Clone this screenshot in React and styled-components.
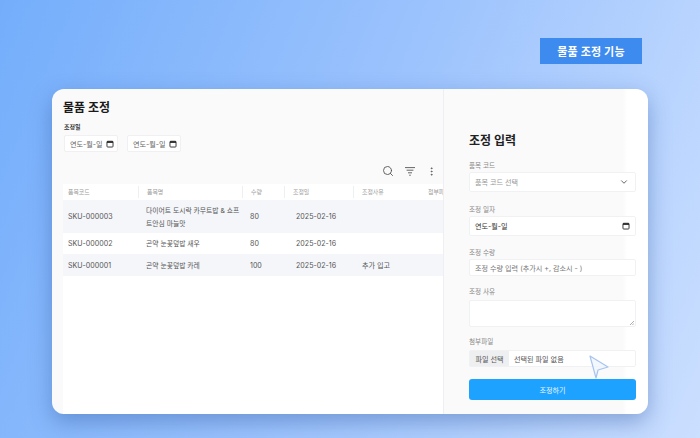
import React from "react";
import styled, { createGlobalStyle } from "styled-components";
import { Search, ChevronDown, EllipsisVertical } from "lucide-react";

const Global = createGlobalStyle`
  html, body { margin: 0; padding: 0; }
  body { font-family: "Inter", "Noto Sans CJK KR", sans-serif; }
  * { box-sizing: border-box; }
`;
const Page = styled.div`
  width: 700px; height: 438px; overflow: hidden;
  display: flex; flex-direction: column; align-items: flex-start;
  padding: 38px 58px 0 52px;
  background: linear-gradient(112deg, #74aefb 0%, #9cc3fd 50%, #cbdfff 100%);
`;
const Badge = styled.div`
  align-self: flex-end; width: 102px; height: 26px;
  display: flex; align-items: center; justify-content: center;
  background: #3d8bef; color: #fff; font-size: 11px; font-weight: 700; letter-spacing: .2px;
`;
const Card = styled.div`
  margin-top: 25px; width: 596px; height: 325px; flex: none;
  display: flex; overflow: hidden; position: relative;
  background: linear-gradient(90deg, #fafafb 0, #fafafb 571px, #fff 575px);
  border-radius: 12px;
  box-shadow: 0 8px 22px rgba(45, 85, 160, .42);
`;
const Left = styled.section`
  width: 392px; flex: none; padding: 10px 0 0 11px;
  display: flex; flex-direction: column; border-right: 1px solid #eeeff1;
`;
const Title = styled.h1`
  margin: 0; font-size: 12px; line-height: 18px; font-weight: 700; color: #1a1a1a;
`;
const FilterLabel = styled.div`
  margin: 5px 0 0 1px; font-size: 6px; line-height: 9px; font-weight: 700; color: #333;
`;
const Dates = styled.div`
  display: flex; gap: 9px; margin: 4px 0 0 1px;
`;
const DateBox = styled.div`
  width: 54px; height: 17px; background: #fff; border: 1px solid #f0f0f2; border-radius: 2px;
  display: flex; align-items: center; gap: 3px; padding-left: 5px;
  font-size: 7.1px; color: #666;
`;
const Tools = styled.div`
  height: 32px; display: flex; align-items: center; justify-content: flex-end; gap: 10px;
  padding: 6px 6px 0 0; color: #555;
`;
const Table = styled.div`
  flex: 1; background: #fff; overflow: hidden;
`;
const Row = styled.div`
  display: grid; grid-template-columns: 75px 104px 42px 69px 67px 60px; align-items: center;
  width: 417px; height: ${p => p.$h}px;
  background: ${p => (p.$shade ? "#f4f6fa" : "#fff")};
  font-size: 7.1px; line-height: 13px; color: #555;
`;
const Head = styled.div`
  padding-left: ${p => p.$pad ?? 8}px; font-size: 5.9px; color: #9a9a9a; white-space: nowrap;
  height: 12px; line-height: 12px;
  border-left: ${p => (p.$first ? "none" : "1px solid #eeeff1")};
`;
const Cell = styled.div`
  padding-left: ${p => p.$pad ?? 8}px;
`;
const NameCell = styled.div`
  padding-left: 8px; font-size: 6.8px; word-break: break-all;
`;
const Right = styled.section`
  flex: 1; padding: 42px 12px 0 25px; display: flex; flex-direction: column;
`;
const FormTitle = styled.h2`
  margin: 0; font-size: 12px; line-height: 20px; font-weight: 700; color: #222;
`;
const Field = styled.div`
  margin-top: ${p => p.$top}px;
`;
const Label = styled.div`
  font-size: 6.6px; line-height: 10px; color: #888; margin-bottom: ${p => p.$gap ?? 1}px;
`;
const Control = styled.div`
  height: ${p => p.$h}px; background: #fff; border: 1px solid #f0f1f3; border-radius: 2px;
  display: flex; align-items: center; justify-content: space-between; padding: 0 ${p => p.$pr ?? 5}px 0 5px;
  font-size: 7.1px; color: ${p => p.$color ?? "#555"}; position: relative; overflow: hidden;
`;
const FileRow = styled.div`
  height: 17px; background: #fff; border: 1px solid #f0f1f3; border-radius: 2px;
  display: flex; align-items: center; font-size: 7.1px; color: #555;
`;
const FileBtn = styled.div`
  width: 39px; height: 100%; background: #eeeff1; display: flex; align-items: center; justify-content: center;
  margin-right: 5px; color: #555;
`;
const Submit = styled.button`
  margin-top: 12px; width: 167px; height: 21px; border: 0; border-radius: 3px;
  background: #1ea2ff; color: #eaf6ff; font: 400 7.1px "Inter", "Noto Sans CJK KR", sans-serif; padding: 0;
`;
const Pointer = styled.svg`
  position: absolute; left: 537px; top: 266px; width: 22px; height: 25px;
`;
const Grip = styled.svg`
  position: absolute; right: 1px; bottom: 1px; width: 5px; height: 5px;
`;

const Cal = ({ s = 8 }) => (
  <svg width={s} height={s} viewBox="0 0 10 10" fill="none">
    <rect x="1.2" y="1.6" width="7.6" height="7.2" rx="1" stroke="#222" strokeWidth="1.1" />
    <rect x="1.2" y="1.6" width="7.6" height="2" fill="#222" />
  </svg>
);
const FilterIcon = () => (
  <svg width="12" height="12" viewBox="0 0 12 12" stroke="#666" strokeWidth="1">
    <path d="M1 2.6h10M2.6 5.2h6.8M4 7.8h4M5.2 10.2h1.6" />
  </svg>
);
const rows = [
  { h: 33, shade: true, sku: "SKU-000003", name: "다이어트 도시락 카무트밥 & 쇼프트안심 마늘맛", qty: "80", reason: "" },
  { h: 21, shade: false, sku: "SKU-000002", name: "곤약 눈꽃덮밥 새우", qty: "80", reason: "" },
  { h: 22, shade: true, sku: "SKU-000001", name: "곤약 눈꽃덮밥 카레", qty: "100", reason: "추가 입고" },
];

export default function App() {
  return (
    <Page>
      <Global />
      <Badge>물품 조정 기능</Badge>
      <Card>
        <Left>
          <Title>물품 조정</Title>
          <FilterLabel>조정일</FilterLabel>
          <Dates>
            <DateBox>연도-월-일 <Cal /></DateBox>
            <DateBox>연도-월-일 <Cal /></DateBox>
          </Dates>
          <Tools>
            <Search size={12} strokeWidth={1.8} />
            <FilterIcon />
            <EllipsisVertical size={11} strokeWidth={1.8} />
          </Tools>
          <Table>
            <Row $h={16}>
              <Head $first $pad={5}>품목코드</Head>
              <Head>품목명</Head>
              <Head>수량</Head>
              <Head>조정일</Head>
              <Head>조정사유</Head>
              <Head $first>첨부파일</Head>
            </Row>
            {rows.map(r => (
              <Row key={r.sku} $h={r.h} $shade={r.shade}>
                <Cell $pad={5}>{r.sku}</Cell>
                <NameCell>{r.name}</NameCell>
                <Cell>{r.qty}</Cell>
                <Cell $pad={12}>2025-02-16</Cell>
                <Cell $pad={9}>{r.reason}</Cell>
                <Cell />
              </Row>
            ))}
          </Table>
        </Left>
        <Right>
          <FormTitle>조정 입력</FormTitle>
          <Field $top={10}>
            <Label>품목 코드</Label>
            <Control $h={20} $color="#999" $pr={6}>품목 코드 선택 <ChevronDown size={10} color="#333" strokeWidth={1.8} /></Control>
          </Field>
          <Field $top={13}>
            <Label>조정 일자</Label>
            <Control $h={20} $color="#333">연도-월-일 <Cal /></Control>
          </Field>
          <Field $top={12}>
            <Label>조정 수량</Label>
            <Control $h={17} $color="#777">조정 수량 입력 (추가시 +, 감소시 - )</Control>
          </Field>
          <Field $top={11}>
            <Label $gap={3}>조정 사유</Label>
            <Control $h={27}>
              <Grip viewBox="0 0 5 5" stroke="#777" strokeWidth=".6"><path d="M5 1L1 5M5 3.4L3.4 5" /></Grip>
            </Control>
          </Field>
          <Field $top={10}>
            <Label $gap={3}>첨부파일</Label>
            <FileRow><FileBtn>파일 선택</FileBtn>선택된 파일 없음</FileRow>
          </Field>
          <Submit>조정하기</Submit>
        </Right>
        <Pointer viewBox="0 0 22 25" fill="rgba(240,246,255,.8)" stroke="#a8c4ee" strokeWidth="1.2" strokeLinejoin="round">
          <path d="M1 1L19 12L9 15L7 23Z" />
        </Pointer>
      </Card>
    </Page>
  );
}
